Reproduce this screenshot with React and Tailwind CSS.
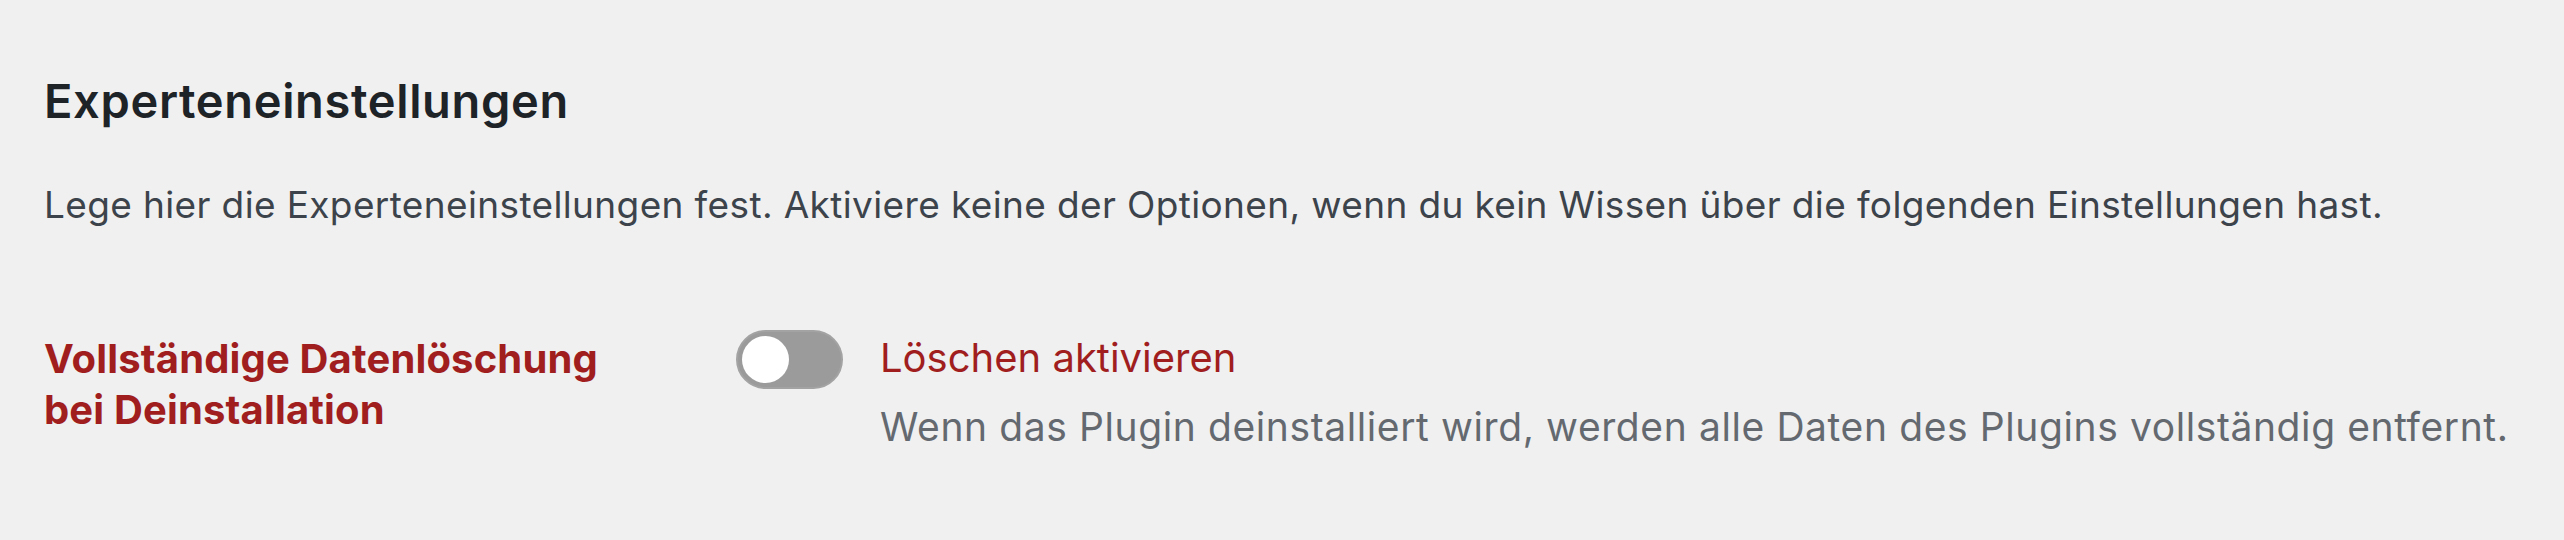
export default function App() {
  return (
    <div
      className="min-h-[540px] w-full bg-[#f0f0f1] pl-[44px] pt-[73px]"
      style={{ fontFamily: 'Inter, "Noto Sans", "Liberation Sans", sans-serif' }}
    >
      <h2 className="text-[47px] leading-[56px] font-semibold text-[#1d2327] tracking-[0.65px]">
        Experteneinstellungen
      </h2>
      <p className="mt-[52px] text-[37px] leading-[48px] text-[#3c434a] tracking-[0.37px]">
        Lege hier die Experteneinstellungen fest. Aktiviere keine der Optionen, wenn du kein Wissen über die folgenden Einstellungen hast.
      </p>
      <div className="mt-[101px] flex items-start">
        <div className="w-[692px] shrink-0 pt-[3px] text-[40px] leading-[51px] font-bold text-[#a01e1e] tracking-[0.15px]">
          Vollständige Datenlöschung
          <br />
          bei Deinstallation
        </div>
        <button
          type="button"
          role="switch"
          aria-checked="false"
          className="flex h-[59px] w-[107px] shrink-0 items-center rounded-full border-2 border-[#a3a3a3] bg-[#9b9b9b] pl-[4px]"
        >
          <span className="block h-[47px] w-[47px] rounded-full bg-white" />
        </button>
        <div className="ml-[37px] flex flex-col pt-[4px]">
          <div className="text-[40px] leading-[48px] text-[#a01e1e]">Löschen aktivieren</div>
          <div className="mt-[21px] text-[39px] leading-[48px] text-[#646970] tracking-[0.6px]">
            Wenn das Plugin deinstalliert wird, werden alle Daten des Plugins vollständig entfernt.
          </div>
        </div>
      </div>
    </div>
  );
}
